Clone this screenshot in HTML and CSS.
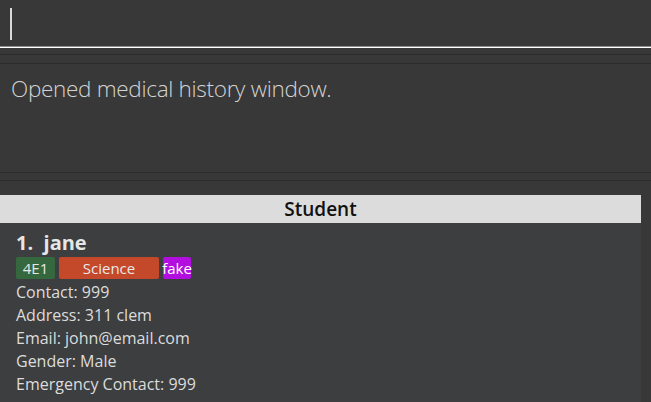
FILE: index.html
```html
<!DOCTYPE html>
<html>
<head>
<meta charset="utf-8">
<link rel="stylesheet" href="styles.css">
</head>
<body>
<div class="app">
  <div class="command"><span class="caret"></span></div>
  <div class="focus-line"></div>
  <div class="result-pane">
    <div class="result-display">
      <p class="result-text">Opened medical history window.</p>
    </div>
  </div>
  <div class="list-area">
    <div class="list">
      <div class="list-header">Student</div>
      <div class="card">
        <div class="name">1.&nbsp;&nbsp;jane</div>
        <div class="tags">
          <span class="tag tag-class">4E1</span>
          <span class="tag tag-subject">Science</span>
          <span class="tag tag-fake">fake</span>
        </div>
        <div class="detail">Contact: 999</div>
        <div class="detail">Address: 311 clem</div>
        <div class="detail">Email: john@email.com</div>
        <div class="detail">Gender: Male</div>
        <div class="detail">Emergency Contact: 999</div>
      </div>
    </div>
    <div class="scroll-strip"></div>
  </div>
</div>
</body>
</html>
```
FILE: styles.css
```css
html, body {
  margin: 0;
  padding: 0;
  background: #383838;
  height: 100%;
  overflow: hidden;
}
.app {
  display: flex;
  flex-direction: column;
  height: 402px;
  font-family: "Open Sans", "Noto Sans", sans-serif;
}
.command {
  height: 47px;
  border-bottom: 1px solid #8c8c8c;
  padding: 8px 0 0 10px;
  box-sizing: border-box;
}
.caret {
  display: block;
  width: 2px;
  height: 32px;
  background: #d8d8d8;
}
.focus-line {
  height: 1px;
  background: #ffffff;
}
.result-pane {
  margin-top: 6px;
  border-top: 1px solid #2b2b2b;
  border-bottom: 1px solid #2b2b2b;
  padding: 8px 0 7px;
}
.result-display {
  border-top: 1px solid #2b2b2b;
  border-bottom: 1px solid #2b2b2b;
  height: 108px;
}
.result-text {
  margin: 0;
  padding: 9px 0 0 11px;
  font-size: 22.5px;
  font-weight: 300;
  color: #d4d4d4;
  letter-spacing: -0.3px;
}
.list-area {
  margin-top: 14px;
  flex: 1;
  display: flex;
}
.list {
  width: 641px;
  background: #3c3e3f;
}
.scroll-strip {
  flex: 1;
  background: #383838;
}
.list-header {
  height: 28px;
  background: #dcdcdc;
  color: #111;
  text-align: center;
  font-size: 19px;
  font-weight: 600;
  line-height: 28px;
}
.card {
  padding: 6px 16px 0;
}
.name {
  font-size: 20px;
  font-weight: 700;
  color: #e6e6e6;
  line-height: 27px;
}
.tags {
  display: flex;
  gap: 4px;
  margin-top: 1px;
  height: 22px;
}
.tag {
  display: flex;
  align-items: center;
  justify-content: center;
  height: 22px;
  border-radius: 2px;
  font-size: 15px;
  color: #e8e8e8;
}
.tag-class {
  width: 39px;
  background: #36683f;
}
.tag-subject {
  width: 100px;
  background: #c4482a;
}
.tag-fake {
  width: 28px;
  background: #b20ee0;
  color: #fff;
}
.detail {
  font-size: 16px;
  color: #dcdcdc;
  line-height: 23px;
}
.tags + .detail {
  margin-top: 2px;
}
```
